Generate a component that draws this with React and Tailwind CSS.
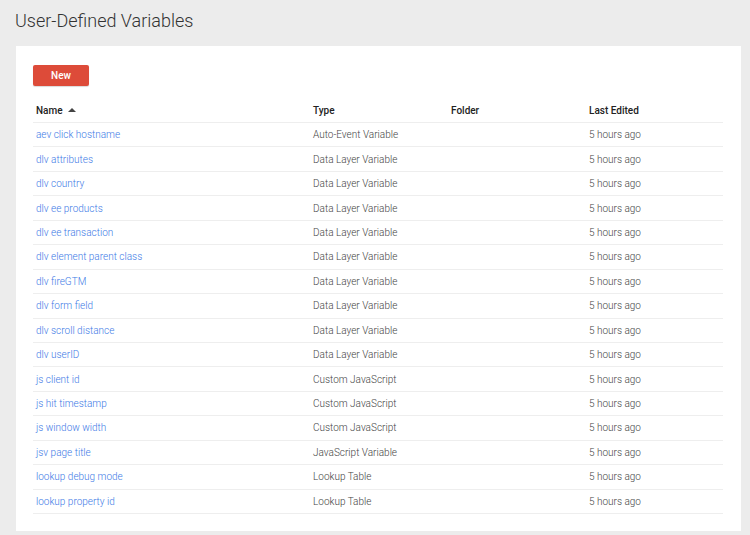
const rows = [
  ["aev click hostname", "Auto-Event Variable"],
  ["dlv attributes", "Data Layer Variable"],
  ["dlv country", "Data Layer Variable"],
  ["dlv ee products", "Data Layer Variable"],
  ["dlv ee transaction", "Data Layer Variable"],
  ["dlv element parent class", "Data Layer Variable"],
  ["dlv fireGTM", "Data Layer Variable"],
  ["dlv form field", "Data Layer Variable"],
  ["dlv scroll distance", "Data Layer Variable"],
  ["dlv userID", "Data Layer Variable"],
  ["js client id", "Custom JavaScript"],
  ["js hit timestamp", "Custom JavaScript"],
  ["js window width", "Custom JavaScript"],
  ["jsv page title", "JavaScript Variable"],
  ["lookup debug mode", "Lookup Table"],
  ["lookup property id", "Lookup Table"],
];

const cols = "grid grid-cols-[277px_138px_138px_1fr] items-center";

export default function App() {
  return (
    <div className="min-h-[535px] bg-[#ececec] font-['Roboto',sans-serif] text-[10px]">
      <h1 className="h-[46px] pl-[15px] pt-[9px] text-[18px] font-light text-[#333] leading-[24px]">
        User-Defined Variables
      </h1>

      <div className="ml-4 w-[725px] bg-white pt-[19px] pl-[17px] pr-[18px] pb-[17px]">
        <button className="h-[21px] w-[56px] rounded-[2px] bg-[#dd4b39] text-[10px] font-medium text-white shadow-[0_1px_1px_rgba(0,0,0,0.15)]">
          New
        </button>

        <div className="mt-[12px]">
          {/* header */}
          <div className={`${cols} h-[25px] border-b border-[#eeeeee] font-medium text-[#222]`}>
            <div className="flex items-center gap-[5px] pl-[3px]">
              Name
              <span className="h-0 w-0 border-x-[4px] border-b-[4px] border-x-transparent border-b-[#444]" />
            </div>
            <div className="pl-[3px]">Type</div>
            <div className="pl-[3px]">Folder</div>
            <div className="pl-[3px]">Last Edited</div>
          </div>

          {rows.map(([name, type]) => (
            <div key={name} className={`${cols} h-[24.45px] border-b border-[#eeeeee] font-light`}>
              <div className="pl-[3px] text-[#3d7ae6]">{name}</div>
              <div className="pl-[3px] text-[#444]">{type}</div>
              <div className="pl-[3px]" />
              <div className="pl-[3px] text-[#444]">5 hours ago</div>
            </div>
          ))}
        </div>
      </div>
    </div>
  );
}
